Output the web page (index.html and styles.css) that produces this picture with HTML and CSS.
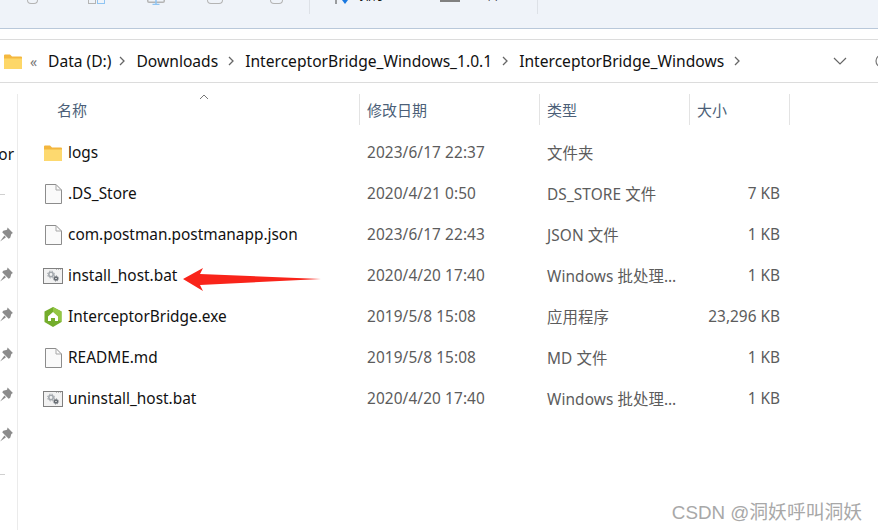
FILE: index.html
```html
<!DOCTYPE html>
<html lang="zh-CN">
  <head>
    <meta charset="UTF-8" />
    <title>InterceptorBridge_Windows</title>
    <link rel="stylesheet" href="styles.css">
  </head>
  <body>
    <svg class="sprite" width="0" height="0">
      <symbol id="fileIcon" viewBox="0 0 20 22">
        <path d="M2.5 1.5H13L18.5 7V20.5H2.5Z" fill="#fafafa" stroke="#8c8c8c" />
        <path d="M13 1.5V7H18.5" fill="none" stroke="#a8a8a8" />
      </symbol>
      <symbol id="batIcon" viewBox="0 0 20 16">
        <rect x="0.5" y="0.5" width="19" height="15" fill="#f2f2f2" stroke="#808080" />
        <path d="M13 1.5H19" stroke="#b5b5b5" stroke-dasharray="1 1" />
        <circle cx="8" cy="6.5" r="2.2" fill="none" stroke="#a3a8ad" stroke-width="1.6" />
        <circle cx="8" cy="6.5" r="3.5" fill="none" stroke="#a3a8ad" stroke-dasharray="1.4 1.4" />
        <circle cx="13" cy="10.5" r="1.5" fill="none" stroke="#5f656b" stroke-width="1.4" />
        <circle cx="13" cy="10.5" r="2.6" fill="none" stroke="#5f656b" stroke-width=".8" stroke-dasharray="1 1" />
      </symbol>
      <symbol id="pinIcon" viewBox="0 0 12 14">
        <path d="M7 0.5L12 5.5L10.5 6.5L9.5 10L8 11L2 5L3 3.5L6.5 2.5Z" fill="#8b8b8b" />
        <path d="M4 8L0 13.5L5.5 9.5Z" fill="#8b8b8b" />
      </symbol>
    </svg>

    <header class="toolbar">
      <span class="toolIcon roundIcon first"></span>
      <span class="toolIcon copyIcon"><span></span><span></span></span>
      <svg class="monitorIcon" width="18" height="5" viewBox="0 0 18 5">
        <path d="M.75 0V1Q.75 2.25 2 2.25H16Q17.25 2.25 17.25 1V0" fill="none" stroke="#b4b4b4" stroke-width="1.5" />
        <path d="M9 0V4M5.5 4.5H12.5" fill="none" stroke="#8fc4f2" stroke-width="1.5" />
      </svg>
      <span class="toolIcon squareIcon one"></span>
      <span class="toolIcon squareIcon two"></span>
      <span class="toolDivider"></span>
      <svg class="sortIcon" width="16" height="4" viewBox="0 0 16 4">
        <path d="M2 0V4" stroke="#444" />
        <path d="M8 0H14L11 4Z" fill="#1a78e0" />
      </svg>
      <span class="toolLabel sortLabel"><span>排序</span></span>
      <span class="viewBar"></span>
      <span class="toolLabel viewLabel"><span>查看</span></span>
      <span class="toolDivider last"></span>
    </header>

    <nav class="addressBar">
      <svg class="addrFolder" width="18" height="15" viewBox="0 0 18 15">
        <path d="M0 1.5Q0 .5 1 .5H6L8 2.5H17Q18 2.5 18 3.5V14Q18 15 17 15H1Q0 15 0 14Z" fill="#f4b83f" />
        <path d="M0 4.5H18V14Q18 15 17 15H1Q0 15 0 14Z" fill="#fdd768" />
      </svg>
      <span class="backIcon">«</span>
      <span class="crumb driveCrumb">Data (D:)</span>
      <svg class="chevron" width="6" height="10" viewBox="0 0 6 10"><path d="M1 1L5 5L1 9" /></svg>
      <span class="crumb">Downloads</span>
      <svg class="chevron" width="6" height="10" viewBox="0 0 6 10"><path d="M1 1L5 5L1 9" /></svg>
      <span class="crumb">InterceptorBridge_Windows_1.0.1</span>
      <svg class="chevron" width="6" height="10" viewBox="0 0 6 10"><path d="M1 1L5 5L1 9" /></svg>
      <span class="crumb">InterceptorBridge_Windows</span>
      <svg class="chevron" width="6" height="10" viewBox="0 0 6 10"><path d="M1 1L5 5L1 9" /></svg>
      <svg class="dropIcon" width="14" height="8" viewBox="0 0 14 8"><path d="M1 1L7 7L13 1" /></svg>
      <svg class="refreshIcon" width="14" height="14" viewBox="0 0 14 14"><circle cx="7" cy="7" r="6" /></svg>
    </nav>

    <main class="content">
      <aside class="sidebar">
        <div class="sideItem sideText"><span>or</span></div>
        <div class="sideItem"><span class="sideLine"></span></div>
        <div class="sideItem"><svg class="pin"><use href="#pinIcon" /></svg></div>
        <div class="sideItem"><svg class="pin"><use href="#pinIcon" /></svg></div>
        <div class="sideItem"><svg class="pin"><use href="#pinIcon" /></svg></div>
        <div class="sideItem"><svg class="pin"><use href="#pinIcon" /></svg></div>
        <div class="sideItem"><svg class="pin"><use href="#pinIcon" /></svg></div>
        <div class="sideItem"><svg class="pin"><use href="#pinIcon" /></svg></div>
        <div class="sideItem"><span class="sideLine"></span></div>
      </aside>

      <section class="fileList">
        <div class="listHead">
          <div class="headCell nameHead">
            名称
            <svg class="sortCaret" width="10" height="6" viewBox="0 0 10 6"><path d="M1 5L5 1L9 5" /></svg>
          </div>
          <div class="headCell">修改日期</div>
          <div class="headCell">类型</div>
          <div class="headCell">大小</div>
          <div class="headEnd"></div>
        </div>

        <div class="row">
          <div class="nameCell">
            <svg class="icon" width="20" height="18" viewBox="0 0 20 18">
              <path d="M1 2.5Q1 1.5 2 1.5H7L9 3.5H18Q19 3.5 19 4.5V16Q19 17 18 17H2Q1 17 1 16Z" fill="#f3b63e" />
              <path d="M1 5.5H19V16Q19 17 18 17H2Q1 17 1 16Z" fill="#fdd96f" />
            </svg>
            <span>logs</span>
          </div>
          <div class="cell">2023/6/17 22:37</div>
          <div class="cell">文件夹</div>
          <div class="cell size"></div>
        </div>
        <div class="row">
          <div class="nameCell">
            <svg class="icon" width="20" height="22"><use href="#fileIcon" /></svg>
            <span>.DS_Store</span>
          </div>
          <div class="cell">2020/4/21 0:50</div>
          <div class="cell">DS_STORE 文件</div>
          <div class="cell size">7 KB</div>
        </div>
        <div class="row">
          <div class="nameCell">
            <svg class="icon" width="20" height="22"><use href="#fileIcon" /></svg>
            <span>com.postman.postmanapp.json</span>
          </div>
          <div class="cell">2023/6/17 22:43</div>
          <div class="cell">JSON 文件</div>
          <div class="cell size">1 KB</div>
        </div>
        <div class="row">
          <div class="nameCell">
            <svg class="icon" width="20" height="16"><use href="#batIcon" /></svg>
            <span>install_host.bat</span>
          </div>
          <div class="cell">2020/4/20 17:40</div>
          <div class="cell">Windows 批处理文件</div>
          <div class="cell size">1 KB</div>
          <svg class="arrow" width="140" height="25" viewBox="0 0 140 25">
            <path d="M0 12L20 1L17 7L138 12L17 18L20 24Z" fill="#f9241a" />
          </svg>
        </div>
        <div class="row">
          <div class="nameCell">
            <svg class="icon" width="20" height="20" viewBox="0 0 20 20">
              <path d="M10 0L18.5 4.5V15L10 20L1.5 15V4.5Z" fill="#74ad2c" />
              <path d="M10 0L18.5 4.5V15L10 10Z" fill="#93c644" />
              <path d="M10 5L15 9.5V14H12V11H8V14H5V9.5Z" fill="#fff" />
            </svg>
            <span>InterceptorBridge.exe</span>
          </div>
          <div class="cell">2019/5/8 15:08</div>
          <div class="cell">应用程序</div>
          <div class="cell size">23,296 KB</div>
        </div>
        <div class="row">
          <div class="nameCell">
            <svg class="icon" width="20" height="22"><use href="#fileIcon" /></svg>
            <span>README.md</span>
          </div>
          <div class="cell">2019/5/8 15:08</div>
          <div class="cell">MD 文件</div>
          <div class="cell size">1 KB</div>
        </div>
        <div class="row">
          <div class="nameCell">
            <svg class="icon" width="20" height="16"><use href="#batIcon" /></svg>
            <span>uninstall_host.bat</span>
          </div>
          <div class="cell">2020/4/20 17:40</div>
          <div class="cell">Windows 批处理文件</div>
          <div class="cell size">1 KB</div>
        </div>
      </section>
    </main>

    <div class="watermark">CSDN @洞妖呼叫洞妖</div>
  </body>
</html>
```

FILE: styles.css
```css
* {
  box-sizing: border-box;
}
html,
body {
  height: 100%;
}
body {
  margin: 0;
  display: flex;
  flex-direction: column;
  overflow: hidden;
  position: relative;
  background: #fff;
  color: #111;
  font-family: 'Noto Sans', 'Noto Sans CJK SC', sans-serif;
  font-size: 15.4px;
}
.sprite {
  position: absolute;
}

/* ribbon, only its bottom edge is in the shot */
.toolbar {
  flex: 0 0 29px;
  display: flex;
  align-items: flex-start;
  background: #eff3f9;
  border-bottom: 1px solid #b9c8da;
  margin-bottom: 10px;
}
.toolIcon {
  display: block;
  height: 4px;
  border: 1.5px solid #b4b4b4;
  border-top: 0;
  border-radius: 0 0 4px 4px;
}
.roundIcon {
  width: 11px;
  margin-left: 27px;
}
.copyIcon {
  width: 17px;
  margin-left: 50px;
  display: flex;
  gap: 1px;
  border: 0;
}
.copyIcon span {
  flex: 1;
  border: 1.5px solid #b4b4b4;
  border-top: 0;
}
.copyIcon span + span {
  border-color: #8fc4f2;
}
.monitorIcon {
  flex: none;
  margin-left: 42px;
}
.squareIcon {
  width: 16px;
}
.squareIcon.one {
  margin-left: 42px;
}
.squareIcon.two {
  width: 13px;
  margin-left: 47px;
}
.toolDivider {
  width: 1px;
  height: 14px;
  margin-left: 26px;
  background: #dde1e7;
}
.toolDivider.last {
  margin-left: 38px;
}
.sortIcon {
  margin-left: 24px;
}
.toolLabel {
  display: flex;
  align-items: flex-end;
  height: 4px;
  overflow: hidden;
  line-height: 20px;
  font-size: 14px;
}
.sortLabel {
  margin-left: 9px;
}
.viewBar {
  width: 20px;
  height: 2px;
  margin-left: 53px;
  background: #808080;
}
.viewLabel {
  margin-left: 11px;
}

/* address bar */
.addressBar {
  flex: 0 0 44px;
  display: flex;
  align-items: center;
  padding-left: 4px;
  border-top: 1px solid #dcdcdc;
  border-bottom: 1px solid #dcdcdc;
  overflow: hidden;
  font-size: 15.6px;
}
.addrFolder {
  flex: none;
}
.backIcon {
  width: 18px;
  margin-left: 8px;
  color: #777;
  font-size: 14px;
}
.crumb {
  white-space: nowrap;
}
.driveCrumb {
  margin-right: -2px;
}
.chevron {
  flex: none;
  margin: 0 11px 0 10px;
  fill: none;
  stroke: #666;
  stroke-width: 1.3;
}
.dropIcon {
  flex: none;
  margin-left: auto;
  fill: none;
  stroke: #666;
  stroke-width: 1.2;
}
.refreshIcon {
  flex: none;
  margin: 0 -11px 0 28px;
  fill: none;
  stroke: #777;
  stroke-width: 1.2;
}

/* panes */
.content {
  flex: 1 1 auto;
  display: flex;
  padding-top: 11px;
  min-height: 0;
}
.sidebar {
  flex: 0 0 18px;
  padding-top: 40px;
  border-right: 1px solid #ebebeb;
  overflow: hidden;
}
.sideItem {
  height: 40px;
  display: flex;
  align-items: center;
}
.sideText {
  justify-content: flex-end;
  padding-right: 3px;
}
.sideLine {
  width: 5px;
  height: 1px;
  background: #d0d0d0;
}
.pin {
  width: 13px;
  height: 15px;
}

.fileList {
  flex: 1 1 auto;
  min-width: 0;
}
.listHead,
.row {
  display: grid;
  grid-template-columns: 341px 180px 150px 100px;
}
.listHead {
  height: 31px;
  margin-bottom: 7px;
  grid-template-columns: 341px 180px 150px 100px 1px;
}
.headCell {
  display: flex;
  align-items: center;
  padding: 0 0 1px 7px;
  border-left: 1px solid #e3e3e3;
  color: #4c5f78;
  font-size: 15px;
}
.nameHead {
  position: relative;
  padding-left: 39px;
  border-left: 0;
}
.sortCaret {
  position: absolute;
  left: 181px;
  top: 0;
  fill: none;
  stroke: #777;
}
.headEnd {
  background: #e3e3e3;
}
.row {
  position: relative;
  height: 41px;
  align-items: center;
}
.nameCell {
  display: flex;
  align-items: center;
  gap: 5px;
  padding-left: 25px;
  white-space: nowrap;
}
.icon {
  flex: none;
}
.cell {
  padding: 0 10px 0 8px;
  color: #5c5c5c;
  letter-spacing: 0.1px;
  white-space: nowrap;
  overflow: hidden;
  text-overflow: ellipsis;
}
.size {
  padding-right: 9px;
  letter-spacing: 0;
  text-align: right;
}
.arrow {
  position: absolute;
  left: 165px;
  top: 12px;
}

.watermark {
  position: absolute;
  right: 16px;
  bottom: 6px;
  color: #a8a8a8;
  font-family: 'Liberation Sans', 'Noto Sans CJK SC', sans-serif;
  font-size: 18.8px;
  white-space: nowrap;
}
```
